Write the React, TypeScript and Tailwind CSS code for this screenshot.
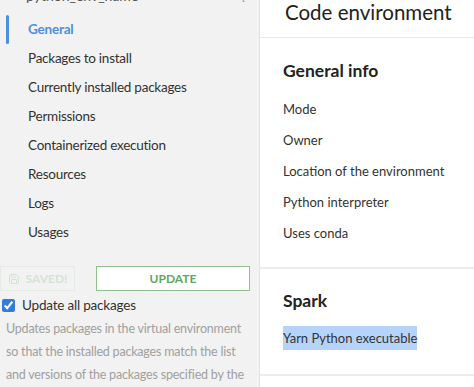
import { Save } from "lucide-react";

const navItems = [
  "General",
  "Packages to install",
  "Currently installed packages",
  "Permissions",
  "Containerized execution",
  "Resources",
  "Logs",
  "Usages",
];

const generalInfo = [
  "Mode",
  "Owner",
  "Location of the environment",
  "Python interpreter",
  "Uses conda",
];

const App = () => {
  return (
    <div
      className="flex h-[387px] w-[474px] overflow-hidden bg-white text-[#333]"
      style={{ fontFamily: 'Lato, "Open Sans", sans-serif' }}
    >
      {/* left settings panel */}
      <div className="w-[260px] shrink-0 border-r border-[#e3e3e3] bg-[#f2f2f2]">
        <div className="flex h-[4px] items-end justify-between overflow-hidden pl-[26px] pr-[14px]">
          <span className="mb-[1px] text-[14px] leading-[14px] text-[#555]">python_env_name</span>
          <span className="text-[14px] leading-[14px] text-[#999]">.</span>
        </div>

        <nav className="mt-[11px] flex flex-col">
          {navItems.map((item, i) => (
            <div key={item} className="relative flex h-[29px] items-center pl-[28px]">
              {i === 0 && (
                <span className="absolute left-[6px] top-[0px] h-[29px] w-[3px] rounded-full bg-[#4a90e2]" />
              )}
              <span
                className={
                  i === 0
                    ? "text-[13.5px] font-bold tracking-[-0.2px] text-[#4a8fe0]"
                    : "text-[13.5px] tracking-[-0.25px] text-[#333]"
                }
              >
                {item}
              </span>
            </div>
          ))}
        </nav>

        <div className="mt-[19px] flex gap-[21px] pr-[9px]">
          <button className="flex h-[25px] w-[75px] items-center justify-center gap-[6px] border border-[#e6ebe6] text-[12px] font-bold text-[#d5e2d5]">
            <Save size={12} strokeWidth={2} />
            SAVED!
          </button>
          <button className="flex h-[25px] flex-1 items-center justify-center border border-[#8cc48c] bg-white text-[12px] font-bold text-[#5fa75f]">
            UPDATE
          </button>
        </div>

        <label className="mt-[4px] flex items-center gap-[7px] pl-[2px]">
          <input type="checkbox" defaultChecked className="h-[13px] w-[13px] accent-[#2f7de1]" />
          <span className="text-[13.5px] tracking-[-0.2px] text-[#333]">Update all packages</span>
        </label>

        <p className="mt-[2px] pl-[6px] pr-[12px] text-[12.5px] leading-[23px] tracking-[-0.2px] text-[#a0a0a0]">
          Updates packages in the virtual environment so that the installed packages match the list
          and versions of the packages specified by the user.
        </p>
      </div>

      {/* right details panel */}
      <div className="flex flex-1 flex-col">
        <div className="flex h-[38px] shrink-0 items-center border-b border-[#e8e8e8] pl-[25px]">
          <h1 className="-mt-[12px] text-[20.5px] text-[#222]">Code environment</h1>
        </div>

        <section className="shrink-0 border-b-2 border-[#ececec] pb-[18px] pl-[23px] pt-[20px]">
          <h2 className="text-[17.5px] font-bold text-[#222]">General info</h2>
          <ul className="mt-[10px] flex flex-col">
            {generalInfo.map((row) => (
              <li key={row} className="flex h-[31px] items-center text-[13px] text-[#333]">
                {row}
              </li>
            ))}
          </ul>
        </section>

        <section className="shrink-0 border-b-2 border-[#ececec] pb-[26px] pl-[23px] pt-[19px]">
          <h2 className="text-[17.5px] font-bold text-[#222]">Spark</h2>
          <div className="mt-[14px] text-[13px] text-[#333]">
            <span className="bg-[#b6d4fb] py-[4px]">Yarn Python executable</span>
          </div>
        </section>
      </div>
    </div>
  );
};

export default App;
